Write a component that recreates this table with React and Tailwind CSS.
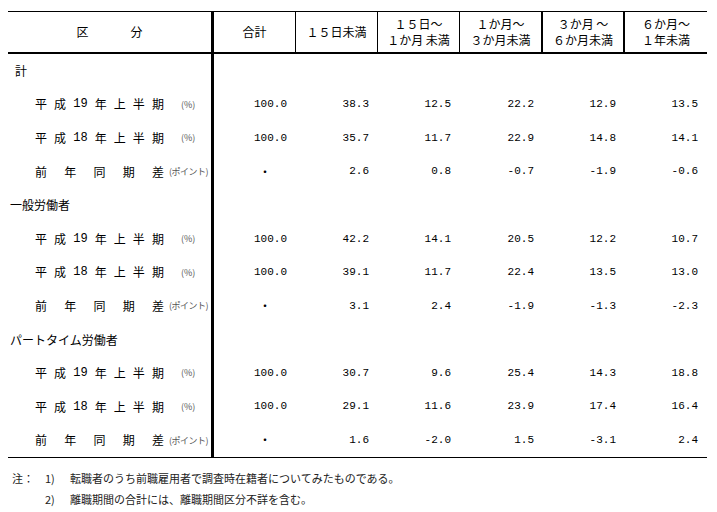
import React from 'react';

const jp = { fontFamily: '"Noto Sans CJK JP", "Noto Sans", sans-serif' };
const mono = { fontFamily: '"Liberation Mono", "DejaVu Sans Mono", monospace' };

// widths of the six data columns (incl. borders)
const cols = [
  'w-[82px] border-r border-black',
  'w-[82px] border-r border-black',
  'w-[82px] border-r border-black',
  'w-[83px] border-r-2 border-black',
  'w-[82px] border-r-2 border-black',
  'w-[82px]',
];
const bodyCols = ['w-[82px]', 'w-[82px]', 'w-[82px]', 'w-[83px]', 'w-[82px]', 'w-[82px]'];

const headers = [
  ['合計'],
  ['１５日未満'],
  ['１５日～', '１か月 未満'],
  ['１か月～', '３か月未満'],
  ['３か月 ～', '６か月未満'],
  ['６か月～', '１年未満'],
];

const groups = [
  {
    name: '計',
    indent: 'pl-[7px]',
    rows: [
      ['100.0', '38.3', '12.5', '22.2', '12.9', '13.5'],
      ['100.0', '35.7', '11.7', '22.9', '14.8', '14.1'],
      ['・', '2.6', '0.8', '-0.7', '-1.9', '-0.6'],
    ],
  },
  {
    name: '一般労働者',
    indent: 'pl-[2px]',
    rows: [
      ['100.0', '42.2', '14.1', '20.5', '12.2', '10.7'],
      ['100.0', '39.1', '11.7', '22.4', '13.5', '13.0'],
      ['・', '3.1', '2.4', '-1.9', '-1.3', '-2.3'],
    ],
  },
  {
    name: 'パートタイム労働者',
    indent: 'pl-[2px]',
    rows: [
      ['100.0', '30.7', '9.6', '25.4', '14.3', '18.8'],
      ['100.0', '29.1', '11.6', '23.9', '17.4', '16.4'],
      ['・', '1.6', '-2.0', '1.5', '-3.1', '2.4'],
    ],
  },
];

function Label({ kind }) {
  if (kind === 2) {
    return (
      <div className="flex items-center pl-[27px]">
        <div className="flex w-[129px] justify-between text-[12px]">
          {['前', '年', '同', '期', '差'].map((c, i) => (
            <span key={i}>{c}</span>
          ))}
        </div>
        <span className="ml-[5px] text-[9px] tracking-[-0.5px] text-[#555]">(ポイント)</span>
      </div>
    );
  }
  const yr = kind === 0 ? '19' : '18';
  return (
    <div className="flex items-center pl-[27px]">
      <div className="flex w-[129px] justify-between text-[12px]">
        {['平', '成', yr, '年', '上', '半', '期'].map((c, i) => (
          <span key={i} style={i === 2 ? mono : undefined}>{c}</span>
        ))}
      </div>
      <span className="ml-[17px] text-[9px] text-[#555]">(%)</span>
    </div>
  );
}

export default function App() {
  return (
    <div className="min-h-[512px] w-[717px] bg-white text-black" style={jp}>
      <div className="pl-[8px] pt-[11px]">
        {/* header */}
        <div className="flex h-[43px] w-[699px] border-t border-b-2 border-black">
          <div className="flex w-[206px] items-center justify-center gap-[42px] border-r-[3px] border-black text-[12px]">
            <span>区</span>
            <span>分</span>
          </div>
          {headers.map((h, i) => (
            <div
              key={i}
              className={`flex flex-col items-center justify-center text-[12px] leading-[16px] ${cols[i]}`}
            >
              {h.map((l, j) => (
                <span key={j}>{l}</span>
              ))}
            </div>
          ))}
        </div>

        {/* body */}
        <div className="w-[699px] border-b border-black">
          {groups.map((g) => (
            <React.Fragment key={g.name}>
              <div className="flex h-[33.6px]">
                <div className={`flex w-[206px] items-center border-r-[3px] border-black text-[12px] ${g.indent}`}>
                  {g.name}
                </div>
              </div>
              {g.rows.map((r, ri) => (
                <div key={ri} className="flex h-[33.6px]">
                  <div className="flex w-[206px] items-center border-r-[3px] border-black">
                    <Label kind={ri} />
                  </div>
                  {r.map((v, ci) =>
                    v === '・' ? (
                      <div key={ci} className={`flex items-center justify-end pr-[25px] text-[12px] ${bodyCols[ci]}`}>
                        ・
                      </div>
                    ) : (
                      <div
                        key={ci}
                        className={`flex items-center justify-end pr-[9px] text-[11px] ${bodyCols[ci]}`}
                        style={mono}
                      >
                        {v}
                      </div>
                    )
                  )}
                </div>
              ))}
            </React.Fragment>
          ))}
        </div>

        {/* notes */}
        <div className="mt-[10px] text-[11px] leading-[21px] text-[#222]">
          <div className="flex">
            <span className="w-[37px] pl-[4px]">注：</span>
            <span className="w-[25px]">1)</span>
            <span>転職者のうち前職雇用者で調査時在籍者についてみたものである。</span>
          </div>
          <div className="flex">
            <span className="w-[37px]" />
            <span className="w-[25px]">2)</span>
            <span>離職期間の合計には、離職期間区分不詳を含む。</span>
          </div>
        </div>
      </div>
    </div>
  );
}
